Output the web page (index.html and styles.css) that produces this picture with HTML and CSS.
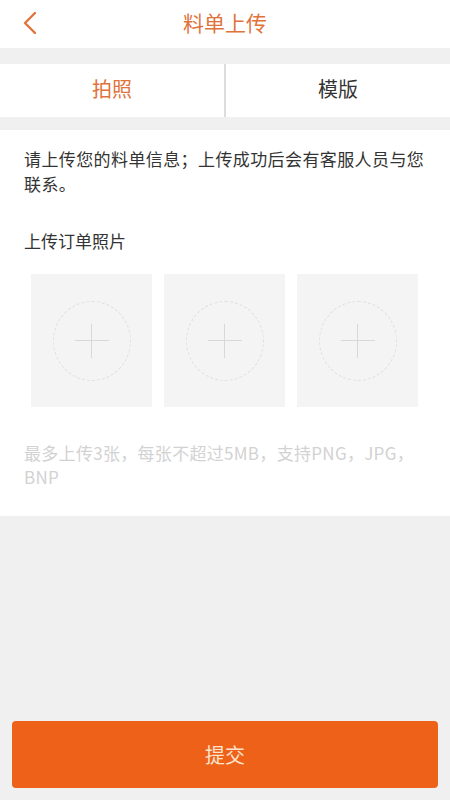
FILE: index.html
```html
<!DOCTYPE html>
<html lang="zh">
<head>
<meta charset="utf-8">
<link rel="stylesheet" href="styles.css">
</head>
<body>
<div class="page">
  <header class="topbar">
    <svg class="back" width="16" height="24" viewBox="0 0 16 24"><path d="M13 2 L3 12 L13 22" fill="none" stroke="#e0733c" stroke-width="2.4" stroke-linecap="round" stroke-linejoin="round"/></svg>
    <div class="title">料单上传</div>
  </header>
  <nav class="tabs">
    <div class="tab active">拍照</div>
    <div class="divider"></div>
    <div class="tab">模版</div>
  </nav>
  <section class="content">
    <p class="intro">请上传您的料单信息；上传成功后会有客服人员与您联系。</p>
    <p class="label">上传订单照片</p>
    <div class="uploads">
      <div class="slot"><div class="circle"><span class="plus"></span></div></div>
      <div class="slot"><div class="circle"><span class="plus"></span></div></div>
      <div class="slot"><div class="circle"><span class="plus"></span></div></div>
    </div>
    <p class="hint">最多上传3张，每张不超过5MB，支持PNG，JPG，BNP</p>
  </section>
  <div class="spacer"></div>
  <div class="footer">
    <button class="submit">提交</button>
  </div>
</div>
</body>
</html>
```
FILE: styles.css
```css
* { box-sizing: border-box; }
html, body { margin: 0; padding: 0; }
body {
  background: #f0f0f0;
  font-family: "Noto Sans CJK SC", "Noto Sans", sans-serif;
  width: 450px;
  height: 800px;
  overflow: hidden;
}
.page {
  height: 800px;
  display: flex;
  flex-direction: column;
}
.topbar {
  height: 48px;
  background: #fff;
  display: flex;
  align-items: center;
  justify-content: center;
  position: relative;
}
.back {
  position: absolute;
  left: 22px;
  top: 11px;
}
.title {
  color: #e0733c;
  font-size: 21px;
  line-height: 48px;
  margin-top: -4px;
}
.tabs {
  margin-top: 16px;
  height: 53px;
  background: #fff;
  display: flex;
  align-items: stretch;
}
.tab {
  flex: 1;
  text-align: center;
  font-size: 20px;
  line-height: 50px;
  color: #333;
}
.tab.active { color: #e0733c; }
.divider {
  width: 2px;
  background: #dcdcdc;
}
.content {
  margin-top: 13px;
  background: #fff;
  padding: 16px 24px 22px 24px;
  height: 386px;
}
.intro {
  margin: 0;
  font-size: 17px;
  letter-spacing: 0.4px;
  line-height: 25px;
  color: #333;
}
.label {
  margin: 32px 0 0 0;
  font-size: 17px;
  line-height: 25px;
  color: #333;
}
.uploads {
  margin-top: 21px;
  display: flex;
  gap: 12px;
  padding-left: 7px;
}
.slot {
  width: 121px;
  height: 133px;
  background: #f4f4f4;
  display: flex;
  align-items: center;
  justify-content: center;
}
.circle {
  width: 78px;
  height: 80px;
  border: 1.5px dashed #dedede;
  border-radius: 50%;
  position: relative;
}
.plus {
  position: absolute;
  left: 50%;
  top: 50%;
  width: 34px;
  height: 34px;
  transform: translate(-50%, -50%);
}
.plus::before, .plus::after {
  content: "";
  position: absolute;
  background: #d8d8d8;
}
.plus::before { left: 0; right: 0; top: 16px; height: 1.5px; }
.plus::after { top: 0; bottom: 0; left: 16px; width: 1.5px; }
.hint {
  margin: 34px 0 0 0;
  font-size: 17px;
  letter-spacing: 0.3px;
  line-height: 24px;
  color: #d2d2d2;
}
.spacer { flex: 1; }
.footer {
  padding: 0 12px 12px 12px;
}
.submit {
  width: 100%;
  height: 67px;
  background: #ed6218;
  border: none;
  border-radius: 4px;
  color: #fde3cf;
  font-family: "Noto Sans CJK SC", "Noto Sans", sans-serif;
  font-size: 20px;
}
```
